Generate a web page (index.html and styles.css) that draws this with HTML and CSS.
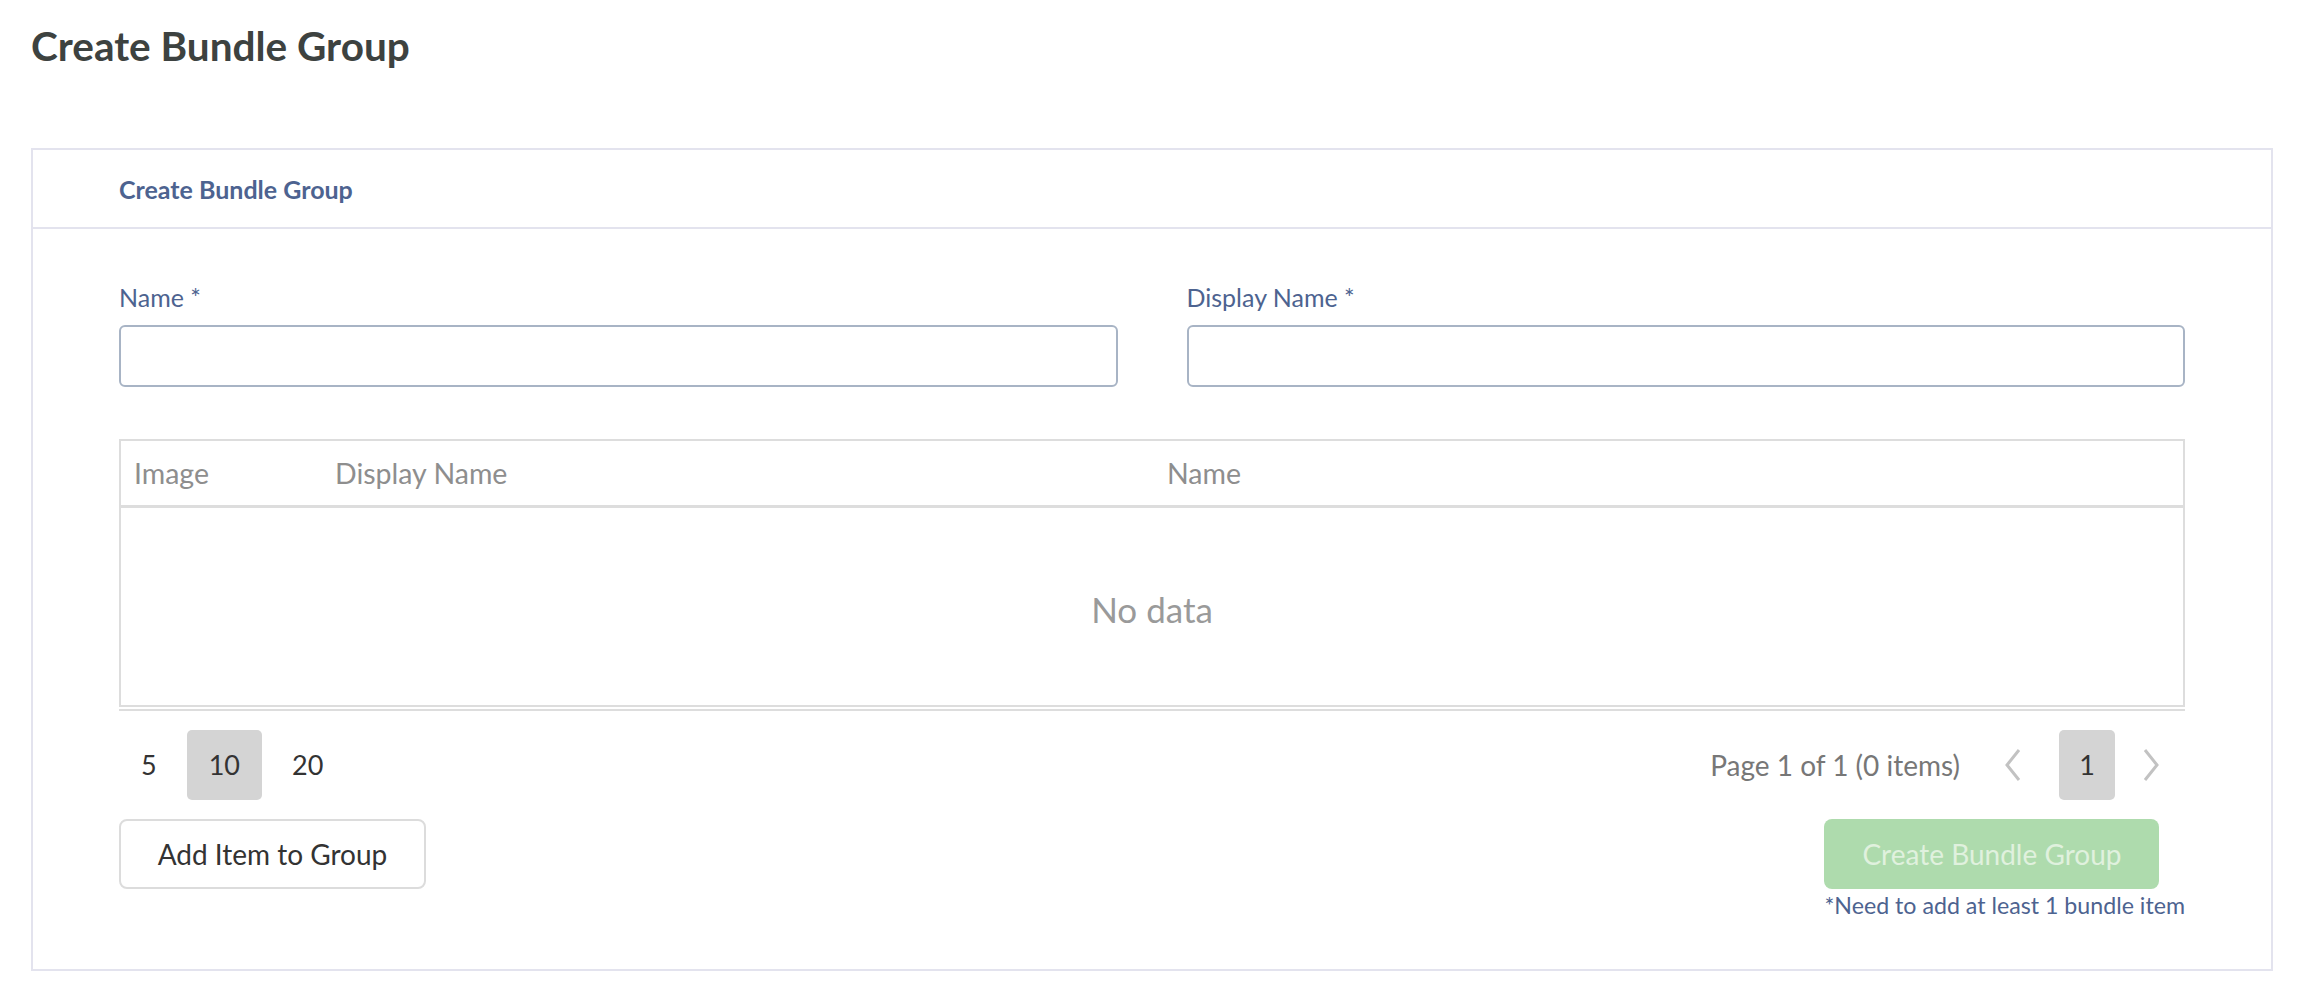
FILE: index.html
```html
<!DOCTYPE html>
<html lang="en">
<head>
<meta charset="utf-8">
<title>Create Bundle Group</title>
<link rel="stylesheet" href="styles.css">
</head>
<body>
<h1 class="page-title">Create Bundle Group</h1>
<section class="card">
  <header class="card-header">Create Bundle Group</header>
  <div class="card-body">
    <div class="form-row">
      <div class="field">
        <label class="field-label">Name *</label>
        <input class="field-input" type="text">
      </div>
      <div class="field">
        <label class="field-label">Display Name *</label>
        <input class="field-input" type="text">
      </div>
    </div>

    <div class="table">
      <div class="table-head">
        <div class="th col-image">Image</div>
        <div class="th col-display">Display Name</div>
        <div class="th col-name">Name</div>
      </div>
      <div class="table-body">No data</div>
    </div>
    <div class="table-rule"></div>

    <div class="pager">
      <div class="page-sizes">
        <span class="ps">5</span>
        <span class="ps ps-active">10</span>
        <span class="ps">20</span>
      </div>
      <div class="pages">
        <span class="page-info">Page 1 of 1 (0 items)</span>
        <span class="nav nav-prev"><svg width="18" height="34" viewBox="0 0 18 34"><polyline points="15,2 3,17 15,32" fill="none" stroke="#c2c2c2" stroke-width="3"/></svg></span>
        <span class="page-num">1</span>
        <span class="nav nav-next"><svg width="18" height="34" viewBox="0 0 18 34"><polyline points="3,2 15,17 3,32" fill="none" stroke="#c2c2c2" stroke-width="3"/></svg></span>
      </div>
    </div>

    <div class="actions">
      <button class="btn btn-outline" type="button">Add Item to Group</button>
      <div class="submit">
        <button class="btn btn-green" type="button" disabled>Create Bundle Group</button>
        <div class="note">*Need to add at least 1 bundle item</div>
      </div>
    </div>
  </div>
</section>
</body>
</html>
```

FILE: styles.css
```css
* { box-sizing: border-box; }
html, body { margin: 0; padding: 0; background: #ffffff; }
body { font-family: Lato, "Open Sans", sans-serif; }

.page-title {
  margin: 0;
  padding: 21px 31px 0;
  font-size: 40.5px;
  line-height: 49px;
  font-weight: 700;
  color: #3d4240;
}

.card {
  margin: 78px 28px 0 31px;
  border: 2px solid #e3e3ee;
}

.card-header {
  height: 79px;
  display: flex;
  align-items: center;
  padding-left: 86px;
  border-bottom: 2px solid #e3e3ee;
  font-size: 25px;
  font-weight: 700;
  color: #4d6390;
}

.card-body {
  padding: 53px 86px 51px;
}

.form-row {
  display: grid;
  grid-template-columns: 1fr 1fr;
  column-gap: 69px;
}
.field { display: flex; flex-direction: column; }
.field-label {
  font-size: 25px;
  line-height: 30px;
  color: #4d6390;
  margin-bottom: 13px;
}
.field-input {
  height: 62px;
  border: 2px solid #a8b4c5;
  border-radius: 6px;
  background: #fff;
  font: inherit;
}

.table {
  margin-top: 52px;
  border: 2px solid #dddddd;
}
.table-head {
  display: flex;
  height: 67px;
  border-bottom: 3px solid #dddddd;
  align-items: center;
}
.th {
  padding-left: 13px;
  font-size: 28.5px;
  color: #8e8e8e;
}
.col-image { width: 201px; }
.col-display { width: 832px; }
.col-name { flex: 1; }

.table-body {
  height: 197px;
  display: flex;
  align-items: center;
  justify-content: center;
  font-size: 35px;
  color: #9a9a9a;
  padding-top: 4px;
}
.table-rule {
  margin-top: 2px;
  border-top: 2px solid #dddddd;
}

.pager {
  margin-top: 19px;
  display: flex;
  justify-content: space-between;
  align-items: center;
}
.page-sizes { display: flex; gap: 8px; }
.ps {
  height: 70px;
  line-height: 70px;
  padding: 0 22px;
  font-size: 27px;
  color: #333;
  border-radius: 5px;
}
.ps-active { background: #d4d4d4; }

.pages { display: flex; align-items: center; padding-right: 12px; }
.page-info {
  font-size: 28px;
  color: #777;
  margin-right: 33px;
}
.nav {
  display: flex;
  align-items: center;
  justify-content: center;
  height: 70px;
}
.nav-prev { width: 40px; margin-right: 26px; }
.nav-next { width: 44px; margin-left: 14px; }
.page-num {
  width: 56px;
  height: 70px;
  line-height: 70px;
  text-align: center;
  font-size: 27px;
  color: #333;
  background: #d4d4d4;
  border-radius: 5px;
}

.actions {
  margin-top: 19px;
  display: flex;
  justify-content: space-between;
  align-items: flex-start;
}
.btn {
  height: 70px;
  border-radius: 8px;
  font-family: Lato, "Open Sans", sans-serif;
  font-size: 28px;
  padding: 0;
}
.btn-outline {
  width: 307px;
  background: #fff;
  border: 2px solid #dcdcdc;
  color: #333;
}
.btn-green {
  width: 335px;
  background: #aedbad;
  border: 0;
  color: #e0f1de;
  font-size: 28px;
}
.submit { display: flex; flex-direction: column; align-items: flex-start; }
.note {
  margin-top: 3px;
  font-size: 23.2px;
  line-height: 26px;
  color: #4d6390;
}
```
